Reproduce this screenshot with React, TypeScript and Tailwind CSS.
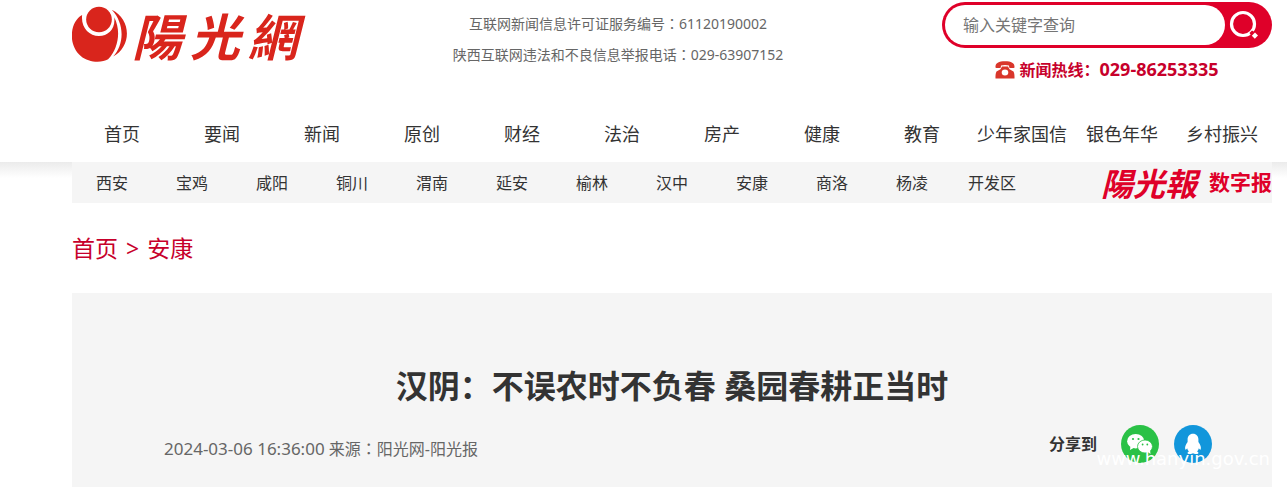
import React from 'react';

const channels = ['首页', '要闻', '新闻', '原创', '财经', '法治', '房产', '健康', '教育', '少年家国信', '银色年华', '乡村振兴'];

const cities = ['西安', '宝鸡', '咸阳', '铜川', '渭南', '延安', '榆林', '汉中', '安康', '商洛', '杨凌', '开发区'];

// full-width colon that sits in the middle of its box
function Colon() {
    return <span lang="zh-TW" className="font-['Noto_Sans_CJK_TC',sans-serif]">：</span>;
}

function SunMark() {
    return (
        <svg viewBox="36 20 166 166" className="h-[56px] w-[56px]" aria-hidden="true">
            <path d="M154 31C213 60 213 140 158 170C192 132 192 72 154 31Z" fill="#d9251c" />
            <path d="M66 47C28 68 24 138 62 168C84 188 124 189 143 178C174 146 182 92 161 53C166 86 144 109 116 109C86 109 62 84 66 47Z" fill="#d9251c" />
            <circle cx="116" cy="60" r="38" fill="#d9251c" />
        </svg>
    );
}

function PhoneIcon() {
    return (
        <svg viewBox="0 0 20 18" className="h-[18px] w-[20px]" fill="#d9362b" aria-hidden="true">
            <path d="M0.5 6.5C0 2 4 0.3 10 0.3S20 2 19.5 6.5C19.4 7.2 14.4 7.2 14.2 6.5L14 4.5C12 3.7 8 3.7 6 4.5L5.8 6.5C5.6 7.2 0.6 7.2 0.5 6.5Z" />
            <path fillRule="evenodd" d="M7 5.5H13L14.5 8.2L18.5 10.5C19.5 12.5 19.6 15 19.5 17.5H0.5C0.4 15 0.5 12.5 1.5 10.5L5.5 8.2ZM10 8.5A3.3 3 0 1 0 10 14.5A3.3 3 0 1 0 10 8.5Z" />
        </svg>
    );
}

function SearchIcon() {
    return (
        <svg viewBox="0 0 30 30" className="h-[30px] w-[30px]" aria-hidden="true">
            <circle cx="14" cy="14" r="11.5" fill="none" stroke="#fff" strokeWidth="3.2" />
            <path d="M20.500 23L23 20.500L27 23L24 28Z" fill="#df0029" />
            <path d="M26 22.5L29 25.5L25.8 28.7L22.8 25.7Z" fill="#fff" />
        </svg>
    );
}

function WechatIcon() {
    return (
        <svg viewBox="0 0 38 38" className="h-[38px] w-[38px]" aria-hidden="true">
            <circle cx="19" cy="19" r="19" fill="#2ac146" />
            <ellipse cx="14.7" cy="16.2" rx="8.6" ry="7.2" fill="#fff" />
            <path d="M9.5 20.5L9 25L13.5 22.5Z" fill="#fff" />
            <ellipse cx="24" cy="21.5" rx="7.5" ry="6.5" fill="#fff" stroke="#2ac146" strokeWidth="0.8" />
            <path d="M26 26.5L29.5 29L29 24.5Z" fill="#fff" />
            <g fill="#2ac146">
                <circle cx="12" cy="14" r="1.1" />
                <circle cx="17.5" cy="14" r="1.1" />
                <circle cx="21.6" cy="19.5" r="0.9" />
                <circle cx="26.3" cy="19.5" r="0.9" />
            </g>
        </svg>
    );
}

function QQIcon() {
    return (
        <svg viewBox="0 0 38 38" className="h-[38px] w-[38px]" aria-hidden="true">
            <circle cx="19" cy="19" r="19" fill="#1296db" />
            <path d="M19 8.800C15.600 8.800 13.600 11.300 13.600 14.300V17C11.600 19.500 10.600 22.500 11.300 24.500C11.800 25 12.600 24 13.200 23.200C13.500 24.600 14 25.500 15 26.500C13 27.200 13 29 15.500 29C17.300 29 18.500 28.700 19 28.200C19.500 28.700 20.700 29 22.500 29C25 29 25 27.200 23 26.500C24 25.500 24.500 24.600 24.800 23.200C25.400 24 26.200 25 26.700 24.500C27.400 22.500 26.400 19.500 24.400 17V14.300C24.400 11.300 22.400 8.800 19 8.800Z" fill="#fff" />
        </svg>
    );
}

const App: React.FC = () => {
    return (
        <div className="bg-white font-['Noto_Sans','Noto_Sans_CJK_SC',sans-serif] text-[#333]" lang="zh-CN">
            <header className="flex pr-[15px] pl-[72px]">
                <a href="#" className="flex h-[107px] w-[240px] shrink-0 items-start gap-1 pt-[6px] font-['Noto_Sans_CJK_TC',sans-serif] font-bold text-[#d9251c] italic">
                    <SunMark />
                    <span className="flex items-center gap-2 text-[50px] leading-[56px]" lang="zh-TW">
                        <span>陽</span>
                        <span>光</span>
                        <span>網</span>
                    </span>
                </a>
                <div className="flex-1 pt-2 text-center text-sm leading-[31px] text-[#666]">
                    <p>互联网新闻信息许可证服务编号<Colon />61120190002</p>
                    <p>陕西互联网违法和不良信息举报电话<Colon />029-63907152</p>
                </div>
                <div className="ml-[18px] w-[330px] shrink-0 pt-[2px]">
                    <form className="flex h-[46px] rounded-full bg-[#df0029] p-[3px]">
                        <input
                            type="text"
                            aria-label="输入关键字查询"
                            placeholder="输入关键字查询"
                            className="min-w-0 flex-1 rounded-full bg-white px-[18px] text-base outline-none placeholder:text-[#757575]"
                        />
                        <button type="button" aria-label="搜索" className="flex w-[44px] items-start pt-[5px] pl-1">
                            <SearchIcon />
                        </button>
                    </form>
                    <p className="flex items-center justify-center gap-1 pt-2 text-base leading-[26px] font-bold text-[#c7002b]">
                        <PhoneIcon />
                        <span>新闻热线：<span className="text-lg leading-[26px]">029-86253335</span></span>
                    </p>
                </div>
            </header>

            <nav className="flex pr-[15px] pl-[72px] text-lg leading-[55px]">
                {channels.map((name) => (
                    <a key={name} href="#" className="flex-1 text-center whitespace-nowrap">{name}</a>
                ))}
            </nav>

            <div className="bg-linear-to-b from-[#ebebeb] to-white to-[16px] pr-[15px] pl-[72px]">
                <div className="flex h-[41px] items-center justify-between bg-[#f5f5f5]">
                    <nav className="flex text-base">
                        {cities.map((name) => (
                            <a key={name} href="#" className="w-[80px] text-center whitespace-nowrap">{name}</a>
                        ))}
                    </nav>
                    <a href="#" className="flex items-center gap-3 font-bold text-[#df0029]">
                        <span lang="zh-TW" className="font-['Noto_Sans_CJK_TC',sans-serif] text-[32px] leading-[41px] italic">陽光報</span>
                        <span className="text-[21px] leading-[41px]">数字报</span>
                    </a>
                </div>
            </div>

            <main className="pr-[15px] pl-[72px]">
                <div className="flex h-[90px] items-center gap-2 text-[23px] text-[#c7002b]">
                    <a href="#">首页</a>
                    <span>&gt;</span>
                    <a href="#">安康</a>
                </div>
                <article className="bg-[#f5f5f5] pt-[69px] pb-6">
                    <h1 className="text-center text-[32px] leading-[48px] font-bold">汉阴：不误农时不负春 桑园春耕正当时</h1>
                    <div className="flex items-center justify-between pt-[15px] pr-[60px] pl-[92px]">
                        <p className="pt-2 text-base text-[#666]"><time className="text-[17px] leading-6">2024-03-06 16:36:00</time> 来源<Colon />阳光网-阳光报</p>
                        <div className="relative flex items-center">
                            <span className="mr-6 font-bold">分享到</span>
                            <a href="#" aria-label="微信" className="mr-[15px]"><WechatIcon /></a>
                            <a href="#" aria-label="QQ"><QQIcon /></a>
                            <span className="pointer-events-none absolute top-[22px] -right-[58px] font-['DejaVu_Sans',sans-serif] text-lg leading-6 text-white">www.hanyin.gov.cn</span>
                        </div>
                    </div>
                </article>
            </main>
        </div>
    );
};

export default App;
